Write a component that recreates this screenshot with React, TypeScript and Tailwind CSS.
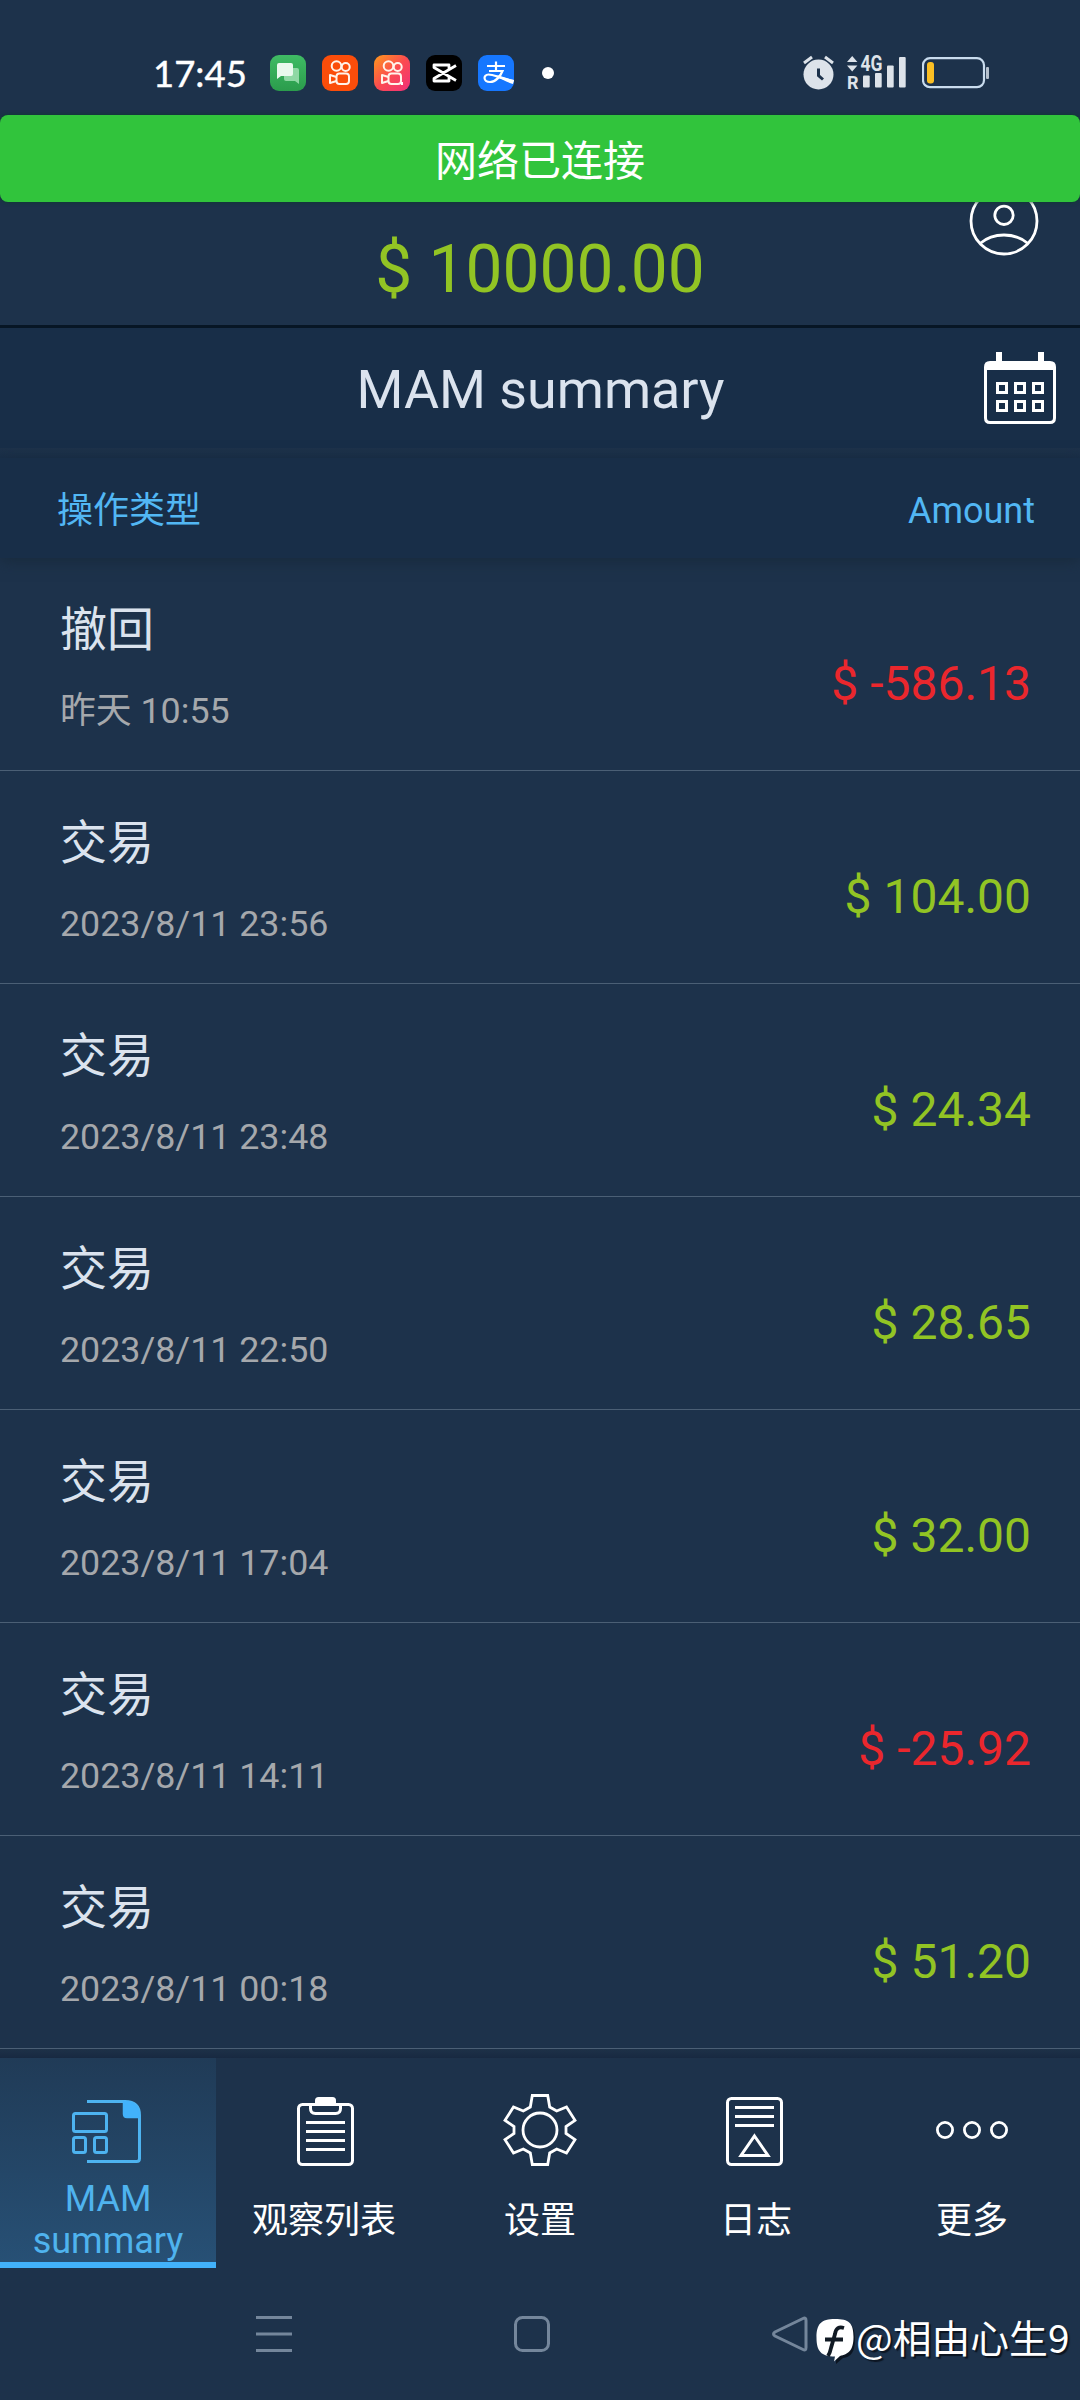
import type { ReactNode } from "react";

type Operation = {
	id: number;
	type: string;
	date: string;
	amount: string;
};

const operations: Operation[] = [
	{ id: 1, type: "撤回", date: "昨天 10:55", amount: "-586.13" },
	{ id: 2, type: "交易", date: "2023/8/11 23:56", amount: "104.00" },
	{ id: 3, type: "交易", date: "2023/8/11 23:48", amount: "24.34" },
	{ id: 4, type: "交易", date: "2023/8/11 22:50", amount: "28.65" },
	{ id: 5, type: "交易", date: "2023/8/11 17:04", amount: "32.00" },
	{ id: 6, type: "交易", date: "2023/8/11 14:11", amount: "-25.92" },
	{ id: 7, type: "交易", date: "2023/8/11 00:18", amount: "51.20" },
];

function MessagesIcon() {
	return (
		<svg width="36" height="36" viewBox="0 0 36 36">
			<defs>
				<linearGradient id="msg" x1="0" y1="0" x2="0" y2="1">
					<stop offset="0" stopColor="#3fbb64" />
					<stop offset="1" stopColor="#2b9c4c" />
				</linearGradient>
			</defs>
			<rect width="36" height="36" rx="9" fill="url(#msg)" />
			<path d="M16 13h11q2 0 2 2v14l-4-3h-9q-2 0-2-2v-9q0-2 2-2z" fill="#8fd8a4" />
			<path d="M9 8h12q2 0 2 2v9q0 2-2 2H11l-4 3V10q0-2 2-2z" fill="#e9f9ed" />
		</svg>
	);
}

function KuaishouIcon({ lite }: { lite?: boolean }) {
	return (
		<svg width="36" height="36" viewBox="0 0 36 36">
			<defs>
				<linearGradient id="lite" x1="0" y1="0" x2="1" y2="1">
					<stop offset="0" stopColor="#ff9a1c" />
					<stop offset="0.5" stopColor="#fb4a50" />
					<stop offset="1" stopColor="#f0307a" />
				</linearGradient>
			</defs>
			<rect width="36" height="36" rx="9" fill={lite ? "url(#lite)" : "#fb4d0a"} />
			<g fill="none" stroke="#fff3ea" strokeWidth="2">
				<circle cx="14.5" cy="11" r="4.8" />
				<circle cx="23.7" cy="12" r="4" />
				<rect x="14.5" y="18.5" width="12.5" height="10.5" rx="3" />
				<path d="M14.5 22L8 20v8l6.500-2" strokeLinejoin="round" />
			</g>
			{lite && <path d="M28 27v3" stroke="#fff" strokeWidth="2" />}
		</svg>
	);
}

function CapCutIcon() {
	return (
		<svg width="36" height="36" viewBox="0 0 36 36">
			<rect width="36" height="36" rx="9" fill="#000" />
			<path
				d="M30 10.500L8 23.500v2.500h15v-4M30 25.500L8 12.500V10h15v4"
				fill="none"
				stroke="#fff"
				strokeWidth="2.800"
				strokeLinejoin="round"
			/>
		</svg>
	);
}

function AlipayIcon() {
	return (
		<svg width="36" height="36" viewBox="0 0 36 36">
			<rect width="36" height="36" rx="9" fill="#1677ff" />
			<g fill="none" stroke="#fff" strokeWidth="2.200">
				<path d="M9 11h18M18 6.500V16M11 16h13.500C22.500 21 18 27 12 27c-7 0-7-7.500-1.500-7.500 5 0 10 3 25 6.500" />
			</g>
			<path d="M20 20.500c5 2 10 3.500 16 4.500l-1 4c-6-2-12-5-17-7z" fill="#fff" />
		</svg>
	);
}

function AlarmIcon() {
	return (
		<svg width="32" height="36" viewBox="0 0 32 36">
			<circle cx="15.500" cy="19.500" r="15" fill="#dde3ea" />
			<path d="M1 8l8-6M30 8l-8-6" stroke="#dde3ea" strokeWidth="3" />
			<path d="M15.500 13.500v7l4.500 4" fill="none" stroke="#1d324b" strokeWidth="3" />
		</svg>
	);
}

function SignalIcon() {
	return (
		<svg width="62" height="52" viewBox="0 -8 62 52">
			<g fill="#dde3ea">
				<path d="M0 7L5.200 1l5.200 6zM0 10.500h10.400L5.200 16.500z" />
				<rect x="16" y="20.500" width="6.700" height="12" rx="1" />
				<rect x="28" y="18" width="6.700" height="14.500" rx="1" />
				<rect x="40" y="10.500" width="6.700" height="22" rx="1" />
				<rect x="52" y="2" width="6.700" height="30.500" rx="1" />
				<text x="13.500" y="16" fontSize="22" fontWeight="700" fontFamily="Roboto" textLength="22" lengthAdjust="spacingAndGlyphs">
					4G
				</text>
				<text x="0" y="34" fontSize="18" fontWeight="700" fontFamily="Roboto">
					R
				</text>
			</g>
		</svg>
	);
}

function BatteryIcon() {
	return (
		<svg width="68" height="32" viewBox="0 0 68 32">
			<rect x="1" y="1.200" width="61" height="29" rx="7" fill="none" stroke="#c9dcee" strokeWidth="2.200" />
			<rect x="5" y="5" width="7" height="21.500" rx="3" fill="#fbbf24" />
			<rect x="64" y="10" width="3" height="12" rx="1" fill="#b4bfcc" />
		</svg>
	);
}

function ProfileIcon() {
	return (
		<svg width="70" height="70" viewBox="0 0 70 70" fill="none" stroke="#fff" strokeWidth="2.800">
			<circle cx="35" cy="35" r="33" />
			<circle cx="35" cy="29.300" r="9.200" />
			<path d="M11 57.500Q21 49 35 49T59 57.500" />
		</svg>
	);
}

function CalendarIcon() {
	return (
		<svg width="72" height="72" viewBox="0 0 72 72">
			<path d="M12 0h6v9h36V0h6v9h6q6 0 6 6v51q0 6-6 6H6q-6 0-6-6V15q0-6 6-6h6zM3 18v48q0 3 3 3h60q3 0 3-3V18z" fill="#fff" fillRule="evenodd" />
			<g fill="none" stroke="#fff" strokeWidth="3">
				<path d="M13.500 31.500h9v9h-9zM31.500 31.500h9v9h-9zM49.500 31.500h9v9h-9zM13.500 49.500h9v9h-9zM31.500 49.500h9v9h-9zM49.500 49.500h9v9h-9z" />
			</g>
		</svg>
	);
}

function SummaryIcon() {
	return (
		<svg width="72" height="72" viewBox="2 0 72 72" fill="none" stroke="#4db3f0" strokeWidth="3">
			<path d="M17 7.500h38q14.500 0 14.500 14v43q0 3-3 3H17" />
			<path d="M53.500 7.500q16 0 16 16H57q-3.500 0-3.500-3.500z" fill="#42b2fb" stroke="#42b2fb" strokeWidth="1.500" />
			<rect x="3.500" y="19.500" width="33" height="18" rx="2" />
			<rect x="3.500" y="43.500" width="12" height="15" rx="2" />
			<rect x="24.500" y="43.500" width="12" height="15" rx="2" />
		</svg>
	);
}

function WatchlistIcon() {
	return (
		<svg width="72" height="72" viewBox="-1 0 72 72" fill="none" stroke="#fff" strokeWidth="3">
			<rect x="9.500" y="10.500" width="54" height="60" rx="4" />
			<path d="M21.500 10.500v4q0 5 5 5h20q5 0 5-5v-4" />
			<path d="M26 10.500V6.500q0-3.500 3.500-3.500h14q3.500 0 3.500 3.500v4z" fill="#fff" stroke="none" />
			<path d="M17 28.500h39M17 37.500h39M17 46.500h39M17 55.500h39" />
		</svg>
	);
}

function SettingsIcon() {
	return (
		<svg width="74" height="74" viewBox="0 0 74 74" fill="none" stroke="#fff" strokeWidth="2.800">
			<circle cx="37" cy="37" r="17" />
			<path d="M29.300 2.500h15.400l2 11.500 7 4 9.800-4 8.500 13.300-9 6.200v7l9 6.200-8.500 13.300-9.800-4-7 4-2 11.500H29.300l-2-11.500-7-4-9.800 4L2 46.700l9-6.200v-7l-9-6.200L10.500 14l9.800 4 7-4z" />
		</svg>
	);
}

function LogIcon() {
	return (
		<svg width="72" height="72" viewBox="2 0 72 72" fill="none" stroke="#fff" strokeWidth="3">
			<rect x="9.500" y="4.500" width="54" height="66" rx="4" />
			<path d="M17 13.500h39M17 22.500h39M17 31.500h39M36.500 42L50 61.500H23z" />
		</svg>
	);
}

function MoreIcon() {
	return (
		<svg width="74" height="72" viewBox="0 0 74 72" fill="none" stroke="#fff" strokeWidth="2.800">
			<circle cx="10" cy="36" r="7.600" />
			<circle cx="37" cy="36" r="7.600" />
			<circle cx="64" cy="36" r="7.600" />
		</svg>
	);
}

function StatusBar() {
	return (
		<div className="flex h-[115px] items-center pt-[30px] pr-[90px] pl-[153px]">
			<span className="w-[117px] text-[36.500px] leading-[40px] text-white font-['Lato',sans-serif] [-webkit-text-stroke:0.400px_white]">
				17:45
			</span>
			<div className="flex items-center gap-4">
				<MessagesIcon />
				<KuaishouIcon />
				<KuaishouIcon lite />
				<CapCutIcon />
				<AlipayIcon />
			</div>
			<span className="ml-7 size-3 rounded-full bg-white" />
			<div className="ml-auto flex items-center">
				<AlarmIcon />
				<span className="ml-3">
					<SignalIcon />
				</span>
				<span className="ml-[13px]">
					<BatteryIcon />
				</span>
			</div>
		</div>
	);
}

function OperationRow({ operation }: { operation: Operation }) {
	const isNegative = operation.amount.startsWith("-");

	return (
		<div className="flex h-[213px] justify-between border-b border-[#4b5f75] pr-[49px] pl-[60px]">
			<div className="pt-[44px]">
				<p className="text-[47px] leading-[56px] text-[#dbe3ee]">{operation.type}</p>
				<p className="mt-[31px] text-[35.800px] leading-[44px] text-[#a5a8ac]">{operation.date}</p>
			</div>
			<span
				className={
					isNegative
						? "mt-[98px] text-[48px] leading-[56px] text-[#ea272d]"
						: "mt-[98px] text-[48px] leading-[56px] text-[#92c424]"
				}
			>
				$ {operation.amount}
			</span>
		</div>
	);
}

function Tab({ icon, label }: { icon: ReactNode; label: string }) {
	return (
		<div className="flex w-[216px] flex-col items-center pt-9 text-white">
			<div className="flex h-[72px] items-center">{icon}</div>
			<span className="mt-[33px] text-[36px] leading-[44px]">{label}</span>
		</div>
	);
}

export default function App() {
	return (
		<div className="flex h-[2400px] w-[1080px] flex-col overflow-hidden bg-[#1d324b] font-['Roboto','Noto_Sans_CJK_SC',sans-serif]">
			<StatusBar />

			{/* Balance, partly covered by the connection toast */}
			<div className="relative h-[210px]">
				<div className="absolute top-[71px] left-[969px]">
					<ProfileIcon />
				</div>
				<div className="relative flex h-[87px] items-center justify-center rounded-lg bg-[#31c43c] pt-1.5 text-[42px] text-white shadow-[0_0_4px_#0b3c2c]">
					网络已连接
				</div>
				<p className="mt-[28px] text-center text-[65.800px] leading-[80px] text-[#92c424]">$ 10000.00</p>
			</div>

			{/* Title */}
			<div className="flex h-[123px] items-center border-t-[3px] border-[#071625] bg-[#182e48] pr-6 pl-[97px]">
				<h1 className="flex-1 pt-[5px] text-center text-[53.800px] text-[#dbe3ee]">MAM summary</h1>
				<CalendarIcon />
			</div>

			<div className="h-[10px] bg-gradient-to-b from-[#1e324a] to-[#192e48]" />
			<div className="relative flex h-[100px] items-center justify-between bg-[#182e48] pt-[6px] pr-[45px] pl-[57px] text-[36px] text-[#52b7f4] shadow-[0_3px_14px_#182a3c]">
				<span>操作类型</span>
				<span>Amount</span>
			</div>

			<div>
				{operations.map((operation) => (
					<OperationRow key={operation.id} operation={operation} />
				))}
			</div>

			{/* Tabs */}
			<div className="h-[9px] bg-gradient-to-b from-[#1d3148] to-[#182941]" />
			<div className="flex h-[210px]">
				<div className="flex w-[216px] flex-col items-center border-b-[6px] border-[#42b2fb] bg-gradient-to-b from-[#203b57] to-[#275075] pt-9 text-[36px] leading-[42px] text-[#4fb3ee]">
					<SummaryIcon />
					<span className="mt-3 text-center">
						MAM
						<br />
						summary
					</span>
				</div>
				<Tab icon={<WatchlistIcon />} label="观察列表" />
				<Tab icon={<SettingsIcon />} label="设置" />
				<Tab icon={<LogIcon />} label="日志" />
				<Tab icon={<MoreIcon />} label="更多" />
			</div>

			{/* System navigation */}
			<div className="relative h-[132px]">
				<div className="flex items-center pt-12 pl-64">
					<svg width="36" height="36" viewBox="0 0 36 36" stroke="#74869b" strokeWidth="3">
						<path d="M0 1.500h36M0 18h36M0 34.500h36" />
					</svg>
					<svg className="ml-[222px]" width="36" height="36" viewBox="0 0 36 36" fill="none" stroke="#74869b" strokeWidth="3">
						<rect x="1.500" y="1.500" width="33" height="33" rx="7" />
					</svg>
					<svg className="ml-[222px]" width="36" height="36" viewBox="0 0 36 36" fill="none" stroke="#74869b" strokeWidth="3">
						<path d="M31 2.500q3-1.500 3 2v27q0 3.500-3 2L3 20q-3-2 0-4z" />
					</svg>
				</div>
				<div className="absolute top-[44px] left-[816px] flex items-start text-white">
					<svg className="mt-[3px]" width="40" height="52" viewBox="-1 3 40 52">
						<path d="M19 9c14 0 19 4 19 18 0 13-4 18-12 19l-7 6v-6" fill="#0c1521" />
						<path
							d="M18 7c14 0 18.500 4 18.500 18S31 42 23 44l-6 5.500 1-5C4 44.500-.5 39-.5 25.500S4 7 18 7z"
							fill="#fff"
						/>
						<path d="M27 16c-5-1.500-8 0-9 6l-4 14q-1 5-3 8M8 27.500h18" fill="none" stroke="#111a24" strokeWidth="3.800" />
					</svg>
					<span className="whitespace-nowrap text-[38.800px] leading-[48px] font-['Noto_Sans_CJK_SC',sans-serif] [text-shadow:2px_2px_1px_#0c1521]">
						@相由心生9
					</span>
				</div>
			</div>
		</div>
	);
}
